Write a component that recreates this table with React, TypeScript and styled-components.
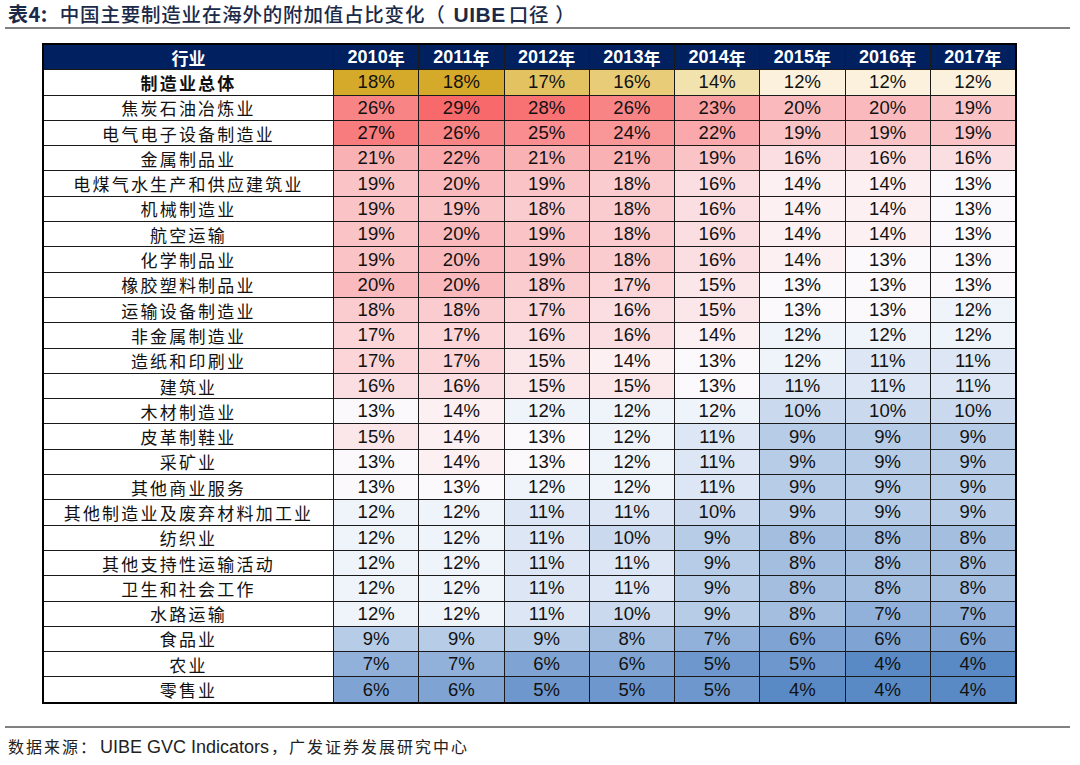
import styled, { createGlobalStyle } from 'styled-components';

const GlobalStyle = createGlobalStyle`
  html, body {
    margin: 0;
    padding: 0;
    background: #ffffff;
  }
`;

const YEARS = [2010, 2011, 2012, 2013, 2014, 2015, 2016, 2017];

const TOTAL_ROW = { name: '制造业总体', values: [18, 18, 17, 16, 14, 12, 12, 12] };

// gold scale used only by the total row
const TOTAL_COLORS: Record<number, string> = {
  18: '#d5aa2b',
  17: '#e3c262',
  16: '#e8cc78',
  14: '#f2e2ae',
  12: '#fbf1dc',
};

const ROWS: { name: string; values: number[] }[] = [
  { name: '焦炭石油冶炼业', values: [26, 29, 28, 26, 23, 20, 20, 19] },
  { name: '电气电子设备制造业', values: [27, 26, 25, 24, 22, 19, 19, 19] },
  { name: '金属制品业', values: [21, 22, 21, 21, 19, 16, 16, 16] },
  { name: '电煤气水生产和供应建筑业', values: [19, 20, 19, 18, 16, 14, 14, 13] },
  { name: '机械制造业', values: [19, 19, 18, 18, 16, 14, 14, 13] },
  { name: '航空运输', values: [19, 20, 19, 18, 16, 14, 14, 13] },
  { name: '化学制品业', values: [19, 20, 19, 18, 16, 14, 13, 13] },
  { name: '橡胶塑料制品业', values: [20, 20, 18, 17, 15, 13, 13, 13] },
  { name: '运输设备制造业', values: [18, 18, 17, 16, 15, 13, 13, 12] },
  { name: '非金属制造业', values: [17, 17, 16, 16, 14, 12, 12, 12] },
  { name: '造纸和印刷业', values: [17, 17, 15, 14, 13, 12, 11, 11] },
  { name: '建筑业', values: [16, 16, 15, 15, 13, 11, 11, 11] },
  { name: '木材制造业', values: [13, 14, 12, 12, 12, 10, 10, 10] },
  { name: '皮革制鞋业', values: [15, 14, 13, 12, 11, 9, 9, 9] },
  { name: '采矿业', values: [13, 14, 13, 12, 11, 9, 9, 9] },
  { name: '其他商业服务', values: [13, 13, 12, 12, 11, 9, 9, 9] },
  { name: '其他制造业及废弃材料加工业', values: [12, 12, 11, 11, 10, 9, 9, 9] },
  { name: '纺织业', values: [12, 12, 11, 10, 9, 8, 8, 8] },
  { name: '其他支持性运输活动', values: [12, 12, 11, 11, 9, 8, 8, 8] },
  { name: '卫生和社会工作', values: [12, 12, 11, 11, 9, 8, 8, 8] },
  { name: '水路运输', values: [12, 12, 11, 10, 9, 8, 7, 7] },
  { name: '食品业', values: [9, 9, 9, 8, 7, 6, 6, 6] },
  { name: '农业', values: [7, 7, 6, 6, 5, 5, 4, 4] },
  { name: '零售业', values: [6, 6, 5, 5, 5, 4, 4, 4] },
];

// Excel-like red / white / blue colour scale
const MIN = 4;
const MID = 12.7;
const MAX = 29;
const RED = [248, 105, 107];
const WHITE = [252, 252, 255];
const BLUE = [90, 138, 198];

function mix(a: number[], b: number[], t: number) {
  const c = a.map((v, i) => Math.round(v + (b[i] - v) * t));
  return `rgb(${c[0]}, ${c[1]}, ${c[2]})`;
}

function heatColor(v: number) {
  if (v >= MID) return mix(WHITE, RED, (v - MID) / (MAX - MID));
  return mix(WHITE, BLUE, (MID - v) / (MID - MIN));
}

export default function App() {
  return (
    <Page>
      <GlobalStyle />
      <TitleBar>
        <TitleLabel>表4:</TitleLabel>
        <TitleText>
          中国主要制造业在海外的附加值占比变化（<TitleLatin>UIBE</TitleLatin>口径<Paren>）</Paren>
        </TitleText>
      </TitleBar>

      <TableWrap>
        <Grid>
          <HeadCell>行业</HeadCell>
          {YEARS.map((y) => (
            <HeadCell key={y}>
              <HeadYear>{y}</HeadYear>年
            </HeadCell>
          ))}

          <NameCell $bold>{TOTAL_ROW.name}</NameCell>
          {TOTAL_ROW.values.map((v, i) => (
            <ValueCell key={i} $bg={TOTAL_COLORS[v]}>
              {v}%
            </ValueCell>
          ))}

          {ROWS.map((row) => [
            <NameCell key={row.name}>{row.name}</NameCell>,
            ...row.values.map((v, i) => (
              <ValueCell key={row.name + i} $bg={heatColor(v)}>
                {v}%
              </ValueCell>
            )),
          ])}
        </Grid>
      </TableWrap>

      <Footer>
        数据来源：<FooterLatin>UIBE GVC Indicators</FooterLatin>，广发证券发展研究中心
      </Footer>
    </Page>
  );
}

const Page = styled.div`
  width: 1080px;
  height: 765px;
  box-sizing: border-box;
  padding: 0 10px 0 5px;
  display: flex;
  flex-direction: column;
  background: #ffffff;
`;

const TitleBar = styled.div`
  height: 29px;
  display: flex;
  align-items: center;
  gap: 12px;
  padding: 0 0 1px 3px;
  box-sizing: border-box;
  border-bottom: 2px solid #808080;
  color: #1b2a48;
  font-family: 'Noto Sans CJK SC', 'Liberation Sans', sans-serif;
  white-space: nowrap;
`;

const TitleLabel = styled.span`
  font-size: 20px;
  font-weight: 700;
  letter-spacing: 0.5px;
`;

const TitleText = styled.span`
  font-size: 19.5px;
  font-weight: 500;
  letter-spacing: 0.8px;
`;

const TitleLatin = styled.span`
  font-family: 'Liberation Sans', Arial, sans-serif;
  font-size: 21px;
  font-weight: 700;
  letter-spacing: 0.5px;
  margin: 0 3px 0 8px;
`;

const Paren = styled.span`
  margin-left: 6px;
`;

const TableWrap = styled.div`
  margin: 14px 0 0 37px;
  width: 975px;
`;

const Grid = styled.div`
  display: grid;
  grid-template-columns: 289px repeat(8, 1fr);
  grid-auto-rows: 24.3px;
  gap: 1px;
  background: #1a1a1a;
  border: 2px solid #000000;
`;

const HeadCell = styled.div`
  display: flex;
  align-items: center;
  justify-content: center;
  background: #002060;
  color: #ffffff;
  font-family: 'Liberation Sans', Arial, 'Noto Sans CJK SC', sans-serif;
  font-size: 17px;
  font-weight: 700;
`;

const HeadYear = styled.span`
  font-size: 18px;
`;

const NameCell = styled.div<{ $bold?: boolean }>`
  display: flex;
  align-items: center;
  justify-content: center;
  background: #ffffff;
  color: #111111;
  font-family: 'Noto Sans CJK SC', sans-serif;
  font-size: 17px;
  font-weight: ${(p) => (p.$bold ? 700 : 400)};
  letter-spacing: 2.2px;
  white-space: nowrap;
`;

const ValueCell = styled.div<{ $bg: string }>`
  display: flex;
  align-items: center;
  justify-content: center;
  background: ${(p) => p.$bg};
  color: #111111;
  font-family: 'Liberation Sans', Arial, sans-serif;
  font-size: 18.5px;
`;

const Footer = styled.div`
  margin-top: 22px;
  padding: 6px 0 0 3px;
  border-top: 2px solid #808080;
  color: #222222;
  font-family: 'Noto Sans CJK SC', sans-serif;
  font-size: 16px;
  letter-spacing: 2px;
  white-space: nowrap;
`;

const FooterLatin = styled.span`
  font-family: 'Liberation Sans', Arial, sans-serif;
  font-size: 18px;
  letter-spacing: 0;
  margin: 0 2px;
`;
